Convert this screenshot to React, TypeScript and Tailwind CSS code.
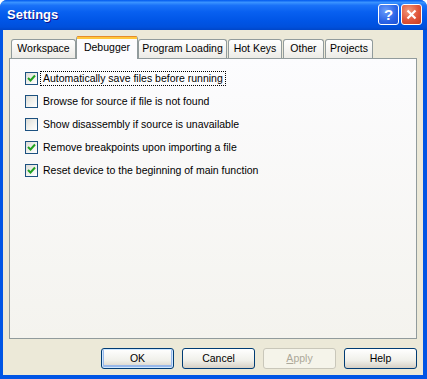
import React from "react";

const tabs = [
  { label: "Workspace", w: "w-[65px]" },
  { label: "Debugger", w: "w-[62px]", active: true },
  { label: "Program Loading", w: "w-[89px]" },
  { label: "Hot Keys", w: "w-[54px]" },
  { label: "Other", w: "w-[41px]" },
  { label: "Projects", w: "w-[48px]" },
];

const options = [
  { label: "Automatically save files before running", checked: true, focus: true },
  { label: "Browse for source if file is not found", checked: false },
  { label: "Show disassembly if source is unavailable", checked: false },
  { label: "Remove breakpoints upon importing a file", checked: true },
  { label: "Reset device to the beginning of main function", checked: true },
];

function CheckBox({ checked }: { checked: boolean }) {
  return (
    <span className="flex h-[13px] w-[13px] shrink-0 items-center justify-center border border-[#1c5180] bg-[linear-gradient(135deg,#dcdcd7_0%,#f0f0ec_50%,#ffffff_100%)]">
      {checked && (
        <svg width="9" height="9" viewBox="0 0 9 9">
          <path d="M1 4 L3.5 6.5 L8 1.5" fill="none" stroke="#21a121" strokeWidth="2" />
        </svg>
      )}
    </span>
  );
}

function Tab({ label, w, active }: { label: string; w: string; active?: boolean }) {
  if (active) {
    return (
      <div
        className={`${w} relative z-10 -mb-px flex h-[23px] flex-col rounded-t-[3px] border-x border-[#919b9c] bg-[#fcfcfe]`}
      >
        <div className="h-[1px] rounded-t-[3px] bg-[#e68b2c]" />
        <div className="h-[2px] bg-[#ffc73c]" />
        <div className="flex flex-1 items-start justify-center pt-[1px] text-[10.5px] text-black">{label}</div>
      </div>
    );
  }
  return (
    <div
      className={`${w} flex h-[19px] items-center justify-center rounded-t-[3px] border border-b-0 border-[#919b9c] bg-[linear-gradient(to_bottom,#ffffff,#ecebe6)] text-[10.5px] text-black`}
    >
      {label}
    </div>
  );
}

function Button({ label, primary, disabled }: { label: React.ReactNode; primary?: boolean; disabled?: boolean }) {
  return (
    <button
      className={`flex h-[21px] w-[73px] items-center justify-center rounded-[3px] border text-[10.5px] ${
        disabled
          ? "border-[#c9c7ba] bg-[#f5f4ea] text-[#aca899]"
          : "border-[#003c74] bg-[linear-gradient(to_bottom,#ffffff,#f0f0ea_60%,#d6d0c5)] text-black"
      } ${primary ? "shadow-[inset_0_0_0_1px_#cee7ff,inset_0_-1px_0_2px_#98b8ea]" : ""}`}
    >
      {label}
    </button>
  );
}

export default function App() {
  return (
    <div className="flex h-[379px] w-[427px] flex-col rounded-t-[7px] bg-[#0055e5] font-['Liberation_Sans',Arial,sans-serif]">
      {/* Title bar */}
      <div className="flex h-[30px] shrink-0 items-center justify-between rounded-t-[7px] bg-[linear-gradient(to_bottom,#0058ee_0%,#3a93ff_8%,#1a72f8_18%,#0860f0_40%,#0055e6_70%,#0050dc_90%,#0046c8_100%)] pl-[7px] pr-[5px]">
        <span className="text-[13px] font-bold text-white [text-shadow:1px_1px_#0f1089]">Settings</span>
        <div className="flex items-center gap-[2px] pb-[1px]">
          <div className="flex h-[21px] w-[21px] items-center justify-center rounded-[3px] border border-white bg-[radial-gradient(circle_at_35%_30%,#6a9dfb,#2a63e6_60%,#1b4fd6)]">
            <span className="text-[15px] font-bold leading-none text-white">?</span>
          </div>
          <div className="flex h-[21px] w-[21px] items-center justify-center rounded-[3px] border border-white bg-[radial-gradient(circle_at_35%_30%,#f29a7c,#e0553a_55%,#c93d1f)]">
            <svg width="11" height="11" viewBox="0 0 11 11">
              <path d="M1.5 1.5 L9.5 9.5 M9.5 1.5 L1.5 9.5" stroke="white" strokeWidth="2.2" />
            </svg>
          </div>
        </div>
      </div>

      {/* Client area */}
      <div className="mb-[4px] ml-[3px] mr-[4px] flex flex-1 flex-col bg-[#ece9d8] pl-[6px] pr-[6px] pt-[5px]">
        <div className="flex h-[23px] items-end gap-0 pl-[2px]">
          <Tab {...tabs[0]} />
          <Tab {...tabs[1]} />
          <Tab {...tabs[2]} />
          <div className="w-px" />
          <Tab {...tabs[3]} />
          <div className="w-px" />
          <Tab {...tabs[4]} />
          <div className="w-px" />
          <Tab {...tabs[5]} />
        </div>

        <div className="flex h-[281px] flex-col border border-[#919b9c] bg-[linear-gradient(to_bottom,#fcfcfe,#f4f3ee)] pl-[15px] pt-[13px]">
          {options.map((o) => (
            <div key={o.label} className="flex h-[23px] items-start gap-[2px]">
              <div className="flex h-[13px] items-center">
                <CheckBox checked={o.checked} />
              </div>
              <span
                className={`-mt-[1px] flex h-[15px] items-center px-[2px] text-[10.5px] text-black ${
                  o.focus ? "border border-dotted border-black" : "border border-transparent"
                }`}
              >
                {o.label}
              </span>
            </div>
          ))}
        </div>

        <div className="mt-[9px] flex justify-end gap-[8px]">
          <Button label="OK" primary />
          <Button label="Cancel" />
          <Button
            label={
              <>
                <span className="underline">A</span>pply
              </>
            }
            disabled
          />
          <Button label="Help" />
        </div>
      </div>
    </div>
  );
}
